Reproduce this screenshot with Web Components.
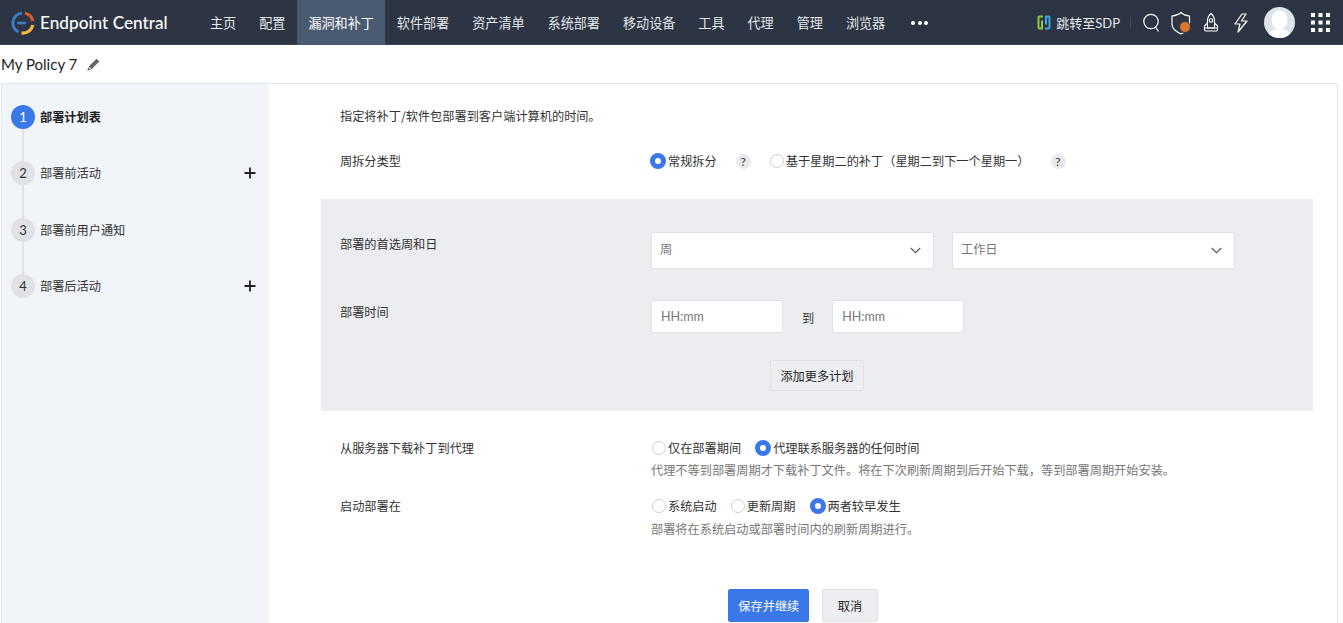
<!DOCTYPE html>
<html lang="zh"><head><meta charset="utf-8"><title>Endpoint Central</title>
<style>
html,body{margin:0;padding:0;height:623px;overflow:hidden;background:#fff;font-family:"Lato","Noto Sans CJK SC",sans-serif;color:#2b2b2b}
</style></head><body>
<template id="t-header"><style>
:host{display:flex;height:45px;background:#2d3443;align-items:stretch;color:#fff;font-size:13.1px;box-shadow:inset 0 -1px 0 #3b4252}
.logo{display:flex;align-items:center;width:198.5px;padding-left:11px;box-sizing:border-box;gap:5px;font:500 17.2px "Lato","Noto Sans CJK SC",sans-serif}
nav{display:flex;align-items:stretch}
a{display:flex;align-items:center;padding:0 11.5px;color:#e4e6ea}
a.on{background:#4a5a71;color:#fff}
.more{margin-left:14.5px;display:flex;align-items:center;gap:2.4px}
.more i{width:4px;height:4px;border-radius:50%;background:#fff}
.right{margin-left:auto;display:flex;align-items:center;padding-right:13px}
.sdp{display:flex;align-items:center;gap:5px;color:#e4e6ea;font-size:13px;margin-right:10px}
.sep{width:1px;height:12px;background:#3e4656;margin-right:11px}
svg{display:block}
.av{width:31px;height:31px;border-radius:50%;background:#dfe3ea;overflow:hidden;margin:0 16px 0 15px}
</style>
<div class="logo"><svg width="24" height="24" viewBox="0 0 24 24" fill="none" stroke-width="3.2">
<path d="M11 2A10 10 0 0 0 7.500 20.900" stroke="#3d7cc0"/><path d="M6 12H15" stroke="#3d7cc0" stroke-width="2.600"/><path d="M14 2.200A10 10 0 0 1 21.800 10" stroke="#e2562f"/><path d="M21.800 14A10 10 0 0 1 10.500 21.900" stroke="#f4b93b"/></svg><span>Endpoint Central</span></div>
<nav><a>主页</a><a>配置</a><a class="on">漏洞和补丁</a><a>软件部署</a><a>资产清单</a><a>系统部署</a><a>移动设备</a><a>工具</a><a>代理</a><a>管理</a><a>浏览器</a><span class="more"><i></i><i></i><i></i></span></nav>
<div class="right"><span class="sdp"><svg width="14" height="15" viewBox="0 0 14 15" fill="none" stroke-width="2"><path d="M6 1.500H2.500a1 1 0 0 0-1 1v10a1 1 0 0 0 1 1H5V5.500" stroke="#8ec63f"/><path d="M8 13.500h3.500a1 1 0 0 0 1-1v-10a1 1 0 0 0-1-1H9v8" stroke="#3ea6e8"/></svg>跳转至SDP</span><span class="sep"></span>
<svg style="margin-right:10px" width="18" height="20" viewBox="0 0 18 20" fill="none" stroke="#fff" stroke-width="1.200"><circle cx="9" cy="8.500" r="7.200"/><path d="M13.500 14l3 4.500"/></svg>
<svg style="margin-right:9px" width="23" height="24" viewBox="0 0 23 24" fill="none" stroke="#fff" stroke-width="1.200"><path d="M11 1.500c2 2 4.500 3 8.500 3.500v8c0 4.500-4 8-8.500 10-4.500-2-9-5.500-9-10V5c4-.5 7-1.500 9-3.500z"/><circle cx="15" cy="16" r="5.500" fill="#d9772f" stroke="#2d3443" stroke-width="1"/></svg>
<svg style="margin-right:13px" width="18" height="22" viewBox="0 0 18 22" fill="none" stroke="#fff" stroke-width="1.100"><path d="M9 1.500c2.500 2 3.500 4.500 3.500 7.500v7h-7V9c0-3 1-5.500 3.500-7.500z"/><circle cx="9" cy="8.500" r="1.700"/><path d="M5.500 11L2.500 14v3.500a1.500 1.500 0 0 0 1.500 1.500h10a1.500 1.500 0 0 0 1.500-1.500V14l-3-3M2.500 16h13"/></svg>
<svg width="16" height="22" viewBox="0 0 16 22" fill="none" stroke="#fff" stroke-width="1.200" stroke-linejoin="round"><path d="M9 2L2 12h5l-2 8 9-11H8.500L13 2z"/></svg>
<span class="av"><svg width="31" height="31" viewBox="0 0 31 31"><ellipse cx="15.500" cy="13" rx="8" ry="9.500" fill="#fff"/><path d="M3 31c1-7 7-9 12.500-9S27 24 28 31z" fill="#fff"/></svg></span>
<svg width="19" height="19" viewBox="0 0 19 19" fill="#fff"><rect width="4" height="4"/><rect x="7.500" width="4" height="4"/><rect x="15" width="4" height="4"/><rect y="7.500" width="4" height="4"/><rect x="7.500" y="7.500" width="4" height="4"/><rect x="15" y="7.500" width="4" height="4"/><rect y="15" width="4" height="4"/><rect x="7.500" y="15" width="4" height="4"/><rect x="15" y="15" width="4" height="4"/></svg>
</div></template>

<template id="t-title"><style>
:host{display:flex;align-items:center;height:38px;padding-left:1px;gap:10px;font:15px "Lato","Noto Sans CJK SC",sans-serif;color:#222}
svg{display:block}
</style><span><slot></slot></span><svg width="13" height="13" viewBox="0 0 13 13" fill="#666"><path d="M9.500.7l2.800 2.800L4.500 11.300 1.700 8.500zM1.200 9.300l2.500 2.500-3.300.8z"/></svg></template>

<template id="t-step"><style>
:host{display:flex;align-items:center;height:24px;margin-bottom:32.500px;font-size:12.200px;color:#333;position:relative;padding-left:9px}
.n{width:24px;height:24px;border-radius:50%;background:#e0e2e6;display:flex;align-items:center;justify-content:center;font:13px "Lato",sans-serif;color:#333;margin-right:5px;flex:none}
:host([active]) .n{background:#3b78e7;color:#fff}
:host([active]){font-weight:700;color:#222}
.p{margin-left:auto;margin-right:13px;width:12px;height:12px;display:none}
:host([plus]) .p{display:block}
.l{position:absolute;left:20px;top:24px;width:2px;height:33px;background:#e2e4e8}
:host([last]) .l{display:none}
</style><span class="n"><slot name="n"></slot></span><slot></slot><svg class="p" viewBox="0 0 12 12"><path d="M6 .5v11M.5 6h11" stroke="#222" stroke-width="1.800"/></svg><span class="l"></span></template>

<template id="t-radio"><style>
:host{display:inline-flex;align-items:center;gap:2px;font-size:12.200px;color:#333;line-height:16px;white-space:nowrap}
.r{width:12px;height:12px;border:1px solid #ccd0d6;border-radius:50%;background:#fff;flex:none;margin-left:1px}
:host([on]) .r{width:6px;height:6px;border:5px solid #3b78e7;margin:0 0 0 -1px}
</style><span class="r"></span><slot></slot></template>

<template id="t-help"><style>
:host{display:inline-flex;width:15px;height:15px;border-radius:50%;background:#e8eaee;align-items:center;justify-content:center;font:12px "Lato",sans-serif;color:#333}
</style>?</template>

<template id="t-select"><style>
:host{display:flex;align-items:center;justify-content:space-between;width:283px;height:37px;box-sizing:border-box;background:#fff;border:1px solid #dfe1e6;border-radius:2px;padding:0 12px 0 8px;font-size:12.200px;color:#777}
svg{display:block}
span{padding-bottom:3px}
</style><span><slot></slot></span><svg width="11" height="7" viewBox="0 0 11 7" fill="none" stroke="#555" stroke-width="1.100"><path d="M.8 1l4.700 4.700L10.200 1"/></svg></template>

<template id="t-time"><style>
:host{display:flex;align-items:center;width:132px;height:33px;box-sizing:border-box;background:#fff;border:1px solid #dfe1e6;border-radius:2px;padding:0 0 1px 9px;font:12.500px "Lato",sans-serif;color:#777}
</style><slot></slot></template>

<template id="t-btn"><style>
:host{display:inline-flex;align-items:center;justify-content:center;box-sizing:border-box;height:33px;padding:0 9px;background:#eceef1;border:1px solid #dfe1e5;border-radius:2px;font-size:12.200px;color:#222}
:host([primary]){background:#3b78e7;border-color:#3b78e7;color:#fff;padding:0 9px}
</style><slot></slot></template>

<template id="t-page"><style>
:host{display:block}
.box{display:flex;height:540px;margin-left:1px;margin-right:5px;border:1px solid #e3e5e9;border-bottom:0;box-sizing:border-box;font-family:"Noto Sans CJK SC","Lato",sans-serif}
aside{width:267px;background:#f1f4f9;flex:none;padding-top:20.500px;box-sizing:border-box}
main{flex:1;min-width:0;padding:0 24px 0 52px;font-size:12.200px;color:#333}
.row{display:grid;grid-template-columns:311px 1fr;padding-left:19px}
.intro{padding:24px 0 0 19px;line-height:16px;height:16px}
.type{margin-top:25px;height:24px}
.radios{display:flex;align-items:center;height:24px;line-height:16px}
.lab{line-height:24px}
.band{margin-top:26px;height:212px;background:#ebedf1;box-sizing:border-box;padding-top:33px}
.band .row{align-items:start}
.pair{display:flex;gap:18px}
.tm{margin-top:31px}
.to{margin:0 18px 0 19px;line-height:37px}
.add{display:flex;justify-content:center;margin-top:23px}
.add x-btn{height:31px}
.hint{color:#777;line-height:16px;white-space:nowrap}
.dl{margin-top:25px}
.st{margin-top:16px}
.actions{display:flex;justify-content:center;gap:13px;margin-top:52px;margin-left:-28px}
</style>
<div class="box"><aside><slot name="steps"></slot></aside><main>
<div class="intro">指定将补丁/软件包部署到客户端计算机的时间。</div>
<div class="row type"><span class="lab">周拆分类型</span><div class="radios"><x-radio on>常规拆分</x-radio><x-help style="margin:0 18px 0 19px"></x-help><x-radio>基于星期二的补丁（星期二到下一个星期一）</x-radio><x-help style="margin-left:21px"></x-help></div></div>
<div class="band">
<div class="row"><span class="lab">部署的首选周和日</span><div class="pair"><x-select>周</x-select><x-select>工作日</x-select></div></div>
<div class="row tm"><span class="lab">部署时间</span><div class="pair" style="gap:0"><x-time>HH:mm</x-time><span class="to">到</span><x-time>HH:mm</x-time></div></div>
<div class="add"><x-btn>添加更多计划</x-btn></div>
</div>
<div class="row dl"><span class="lab">从服务器下载补丁到代理</span><div><div class="radios"><x-radio style="margin-right:15px">仅在部署期间</x-radio><x-radio on>代理联系服务器的任何时间</x-radio></div><div class="hint" style="margin-top:2px">代理不等到部署周期才下载补丁文件。将在下次刷新周期到后开始下载，等到部署周期开始安装。</div></div></div>
<div class="row st"><span class="lab">启动部署在</span><div><div class="radios"><x-radio style="margin-right:13px">系统启动</x-radio><x-radio style="margin-right:15px">更新周期</x-radio><x-radio on>两者较早发生</x-radio></div><div class="hint" style="margin-top:3px">部署将在系统启动或部署时间内的刷新周期进行。</div></div></div>
<div class="actions"><x-btn primary>保存并继续</x-btn><x-btn style="padding:0 14.500px">取消</x-btn></div>
</main></div></template>

<x-header></x-header>
<x-title>My Policy 7</x-title>
<x-page>
<x-step slot="steps" active><span slot="n">1</span>部署计划表</x-step>
<x-step slot="steps" plus><span slot="n">2</span>部署前活动</x-step>
<x-step slot="steps"><span slot="n">3</span>部署前用户通知</x-step>
<x-step slot="steps" plus last><span slot="n">4</span>部署后活动</x-step>
</x-page>
<script>
for(const [tag,id] of [['x-header','t-header'],['x-title','t-title'],['x-step','t-step'],['x-radio','t-radio'],['x-help','t-help'],['x-select','t-select'],['x-time','t-time'],['x-btn','t-btn'],['x-page','t-page']]){
 customElements.define(tag,class extends HTMLElement{constructor(){super();this.attachShadow({mode:'open'}).appendChild(document.getElementById(id).content.cloneNode(true));}});
}
</script>
</body></html>
